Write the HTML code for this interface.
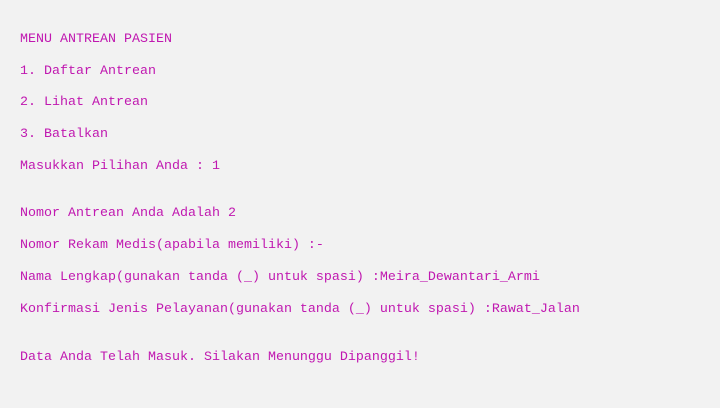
<!DOCTYPE html>
<html><head><style>
html,body{margin:0;width:720px;height:408px;background:#f2f2f2;overflow:hidden}
.l{position:absolute;left:20px;font-family:"Liberation Mono",monospace;font-size:13.33px;color:#c018b0;white-space:pre;line-height:16px}
</style></head><body>
<div class="l" style="top:32px">MENU ANTREAN PASIEN</div>
<div class="l" style="top:64px">1. Daftar Antrean</div>
<div class="l" style="top:95px">2. Lihat Antrean</div>
<div class="l" style="top:127px">3. Batalkan</div>
<div class="l" style="top:159px">Masukkan Pilihan Anda : 1</div>
<div class="l" style="top:206px">Nomor Antrean Anda Adalah 2</div>
<div class="l" style="top:238px">Nomor Rekam Medis(apabila memiliki) :-</div>
<div class="l" style="top:270px">Nama Lengkap(gunakan tanda (_) untuk spasi) :Meira_Dewantari_Armi</div>
<div class="l" style="top:302px">Konfirmasi Jenis Pelayanan(gunakan tanda (_) untuk spasi) :Rawat_Jalan</div>
<div class="l" style="top:350px">Data Anda Telah Masuk. Silakan Menunggu Dipanggil!</div>
</body></html>
